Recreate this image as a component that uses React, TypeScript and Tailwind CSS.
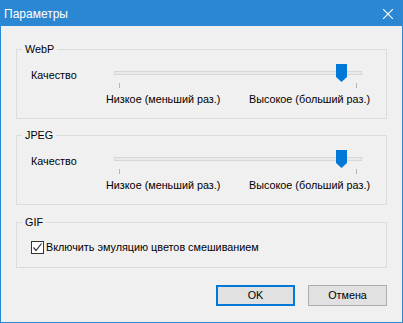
import React from "react";

function Slider({ value }: { value: number }) {
  const left = 5 + (238 * value) / 100 - 5.5;
  return (
    <div className="flex flex-col">
      <div className="relative w-[248px] h-[18px]">
        <div className="absolute left-0 right-0 top-[7px] h-[4px] border border-[#d6d6d6] bg-[#e7eaea]" />
        <svg
          className="absolute top-0"
          style={{ left: `${left}px` }}
          width="11"
          height="18"
          viewBox="0 0 11 18"
        >
          <path d="M0 0 H11 V13 L5.5 18 L0 13 Z" fill="#0078d7" />
        </svg>
      </div>
      <div className="relative h-[5px] mt-[1px]">
        <div className="absolute left-[5px] top-0 w-px h-[5px] bg-[#b4b4b4]" />
        <div className="absolute right-[5px] top-0 w-px h-[5px] bg-[#b4b4b4]" />
      </div>
    </div>
  );
}

function QualityGroup({ title, mt }: { title: string; mt: string }) {
  return (
    <fieldset className={`border border-[#dcdcdc] h-[78px] ${mt}`}>
      <legend className="ml-[5px] px-[3px] leading-[16px]">{title}</legend>
      <div className="flex mt-[7px]">
        <span className="w-[97px] pl-[14px] pt-[2px] h-[18px] leading-[18px]">Качество</span>
        <Slider value={93.5} />
      </div>
      <div className="flex justify-between pl-[89px] pr-[16px] mt-[4px] leading-[15px]">
        <span>Низкое (меньший раз.)</span>
        <span>Высокое (больший раз.)</span>
      </div>
    </fieldset>
  );
}

export default function App() {
  return (
    <div className="w-[403px] h-[323px] bg-[#f0f0f0] border border-[#2b87d1] flex flex-col text-[10.8px] text-black font-['Liberation_Sans',Arial,sans-serif]">
      <div className="h-[25px] shrink-0 bg-[#2b87d1] flex items-center justify-between pl-[3px] pr-[9px] text-white">
        <span className="leading-[16px] text-[12px]">Параметры</span>
        <svg width="10" height="10" viewBox="0 0 10 10">
          <path d="M0 0 L10 10 M10 0 L0 10" stroke="#ffffff" strokeWidth="1.1" />
        </svg>
      </div>
      <div className="flex flex-col px-[15px]">
        <QualityGroup title="WebP" mt="mt-[15px]" />
        <QualityGroup title="JPEG" mt="mt-[8px]" />
        <fieldset className="border border-[#dcdcdc] h-[54px] mt-[9px]">
          <legend className="ml-[5px] px-[3px] leading-[16px]">GIF</legend>
          <div className="flex items-center gap-[2px] pl-[14px] mt-[9px]">
            <span className="w-[13px] h-[13px] border border-[#333333] bg-white flex items-center justify-center">
              <svg width="11" height="11" viewBox="0 0 11 11">
                <path d="M1.5 5.5 L4 8.5 L9.5 1.5" fill="none" stroke="#333333" strokeWidth="1.2" />
              </svg>
            </span>
            <span className="leading-[15px] pt-[1px]">Включить эмуляцию цветов смешиванием</span>
          </div>
        </fieldset>
        <div className="flex justify-end gap-[13px] mt-[17px]">
          <button className="w-[79px] h-[21px] border-2 border-[#0078d7] bg-[#e1e1e1] leading-[17px]">OK</button>
          <button className="w-[79px] h-[21px] border border-[#adadad] bg-[#e1e1e1] leading-[19px]">Отмена</button>
        </div>
      </div>
    </div>
  );
}
